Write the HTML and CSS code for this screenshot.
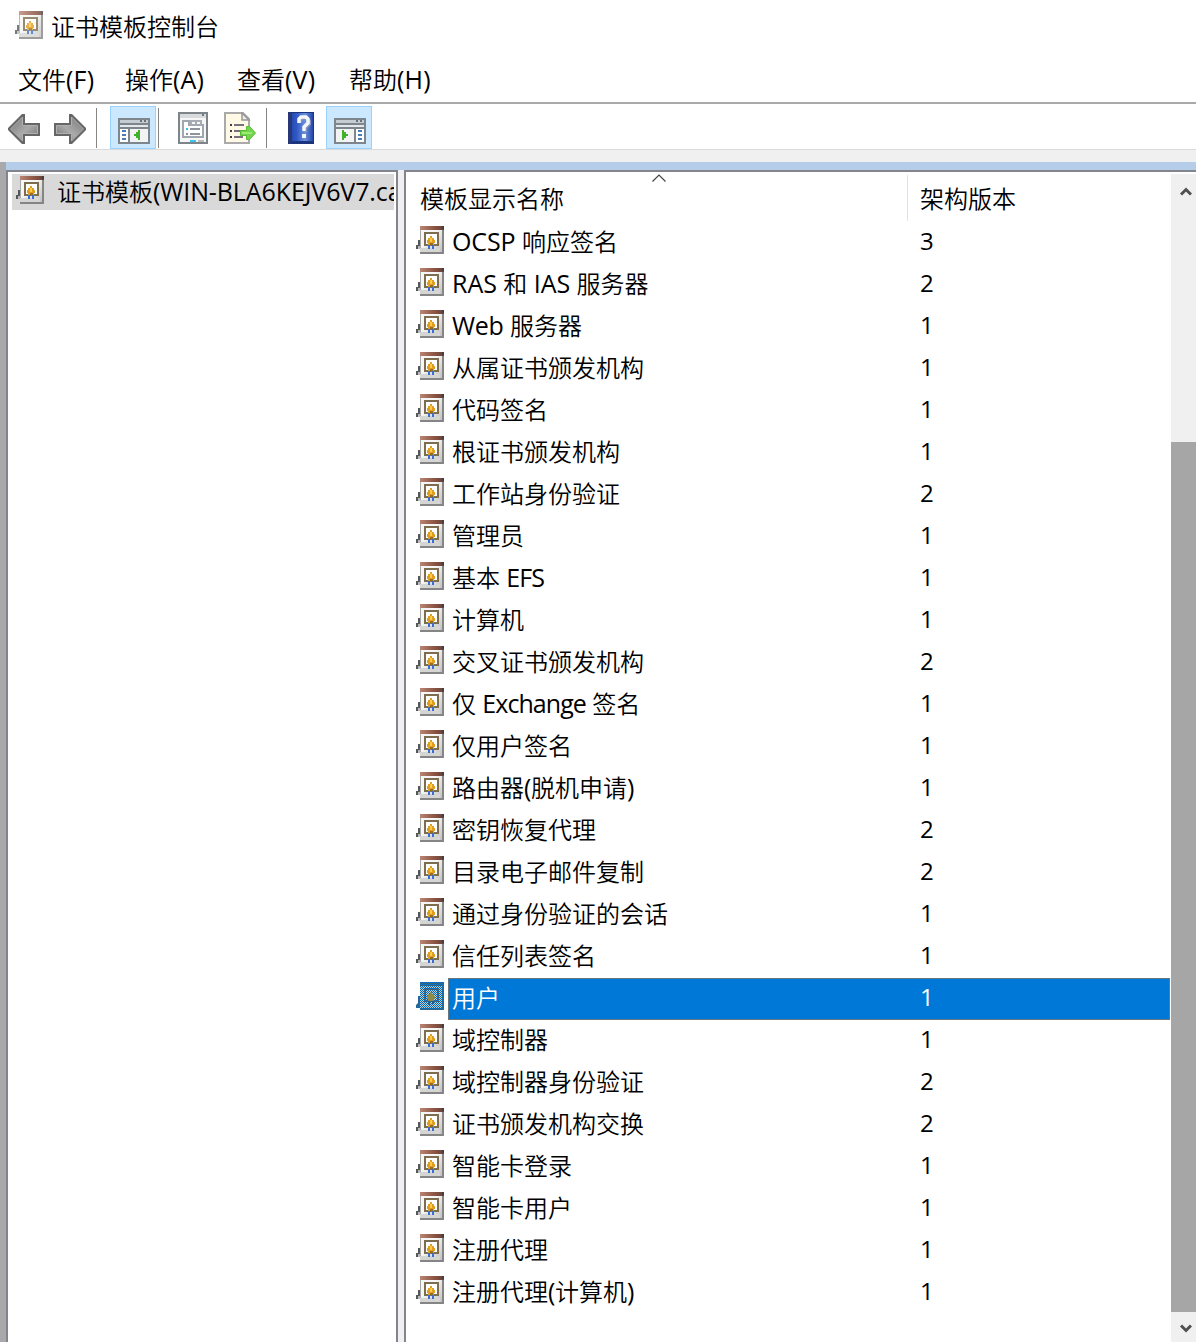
FILE: index.html
```
<!DOCTYPE html>
<html lang="zh-CN">
<head>
<meta charset="utf-8">
<title>证书模板控制台</title>
<link rel="stylesheet" href="styles.css">
</head>
<body>
<svg class="defs" width="0" height="0" aria-hidden="true">
  <defs>
    <linearGradient id="bar" x1="0" x2="1"><stop offset="0" stop-color="#b98674"/><stop offset=".6" stop-color="#8d5443"/><stop offset="1" stop-color="#654039"/></linearGradient>
    <linearGradient id="paper" x1="0" y1="0" x2="1" y2="1"><stop offset=".4" stop-color="#f6f6f5"/><stop offset="1" stop-color="#b9b9b9"/></linearGradient>
    <linearGradient id="metal" x1="0" y1="0" x2="1" y2="1"><stop offset="0" stop-color="#777"/><stop offset=".55" stop-color="#aaa"/><stop offset="1" stop-color="#707070"/></linearGradient>
    <linearGradient id="blue" x1="0" x2="1"><stop offset="0" stop-color="#2345ad"/><stop offset=".3" stop-color="#3159c6"/><stop offset=".65" stop-color="#6d91df"/><stop offset="1" stop-color="#2445a9"/></linearGradient>
    <pattern id="dither" width="2" height="2" patternUnits="userSpaceOnUse"><path fill="#0068b8" d="M0 0h1v1H0zM1 1h1v1H1z"/></pattern>
    <symbol id="cert" viewBox="0 0 28 28">
      <path fill="#55585b" d="M2 14h2v9H0v-4h2z"/>
      <path fill="#b9bcbd" d="M2 20h3v3H2z"/>
      <path fill="url(#paper)" d="M4 0h24v28H4z"/>
      <path fill="#a8a8a8" d="M4 3h1v20H4z"/>
      <path fill="#858585" d="M26 3h2v25H4v-2h22z"/>
      <path fill="#d5d5d3" d="M4 22h20v4H4z"/>
      <path fill="url(#bar)" d="M4 0h24v4H4z"/>
      <path fill="#443e3e" d="M26 0h2v3h-2z"/>
      <path fill="#fff" stroke="#7d6d50" stroke-width="2" d="M9 7h13v12H9z"/>
      <path fill="#3a6fd0" d="M12 17h2v6h-2zM16 17h2v6h-2z"/>
      <path fill="#dfa022" d="M14 10h2v2h2v2h1v3h-1v2h-6v-2h-1v-3h1v-2h2z"/>
      <path fill="#9d6c1c" d="M14 17h3v2h-3z"/>
      <path fill="#ffc94c" d="M14 12h2v4h-2z"/>
    </symbol>
    <symbol id="certsel" viewBox="0 0 28 28">
      <path fill="#24679a" d="M2 14h2v-2h3v14H0v-3l2-2z"/>
      <path fill="#c3cfd6" d="M4 0h24v28H4z"/>
      <path fill="#3f6d88" d="M4 0h24v4H4zM26 4h2v24H4v-2h22z"/>
      <path fill="none" stroke="#56686f" stroke-width="2" d="M9 7h13v12H9z"/>
      <path fill="url(#dither)" d="M4 0h24v28H4z"/>
      <path fill="#1c5c9c" d="M12 18h2v5h-2zM16 18h2v4h-2z"/>
      <path fill="#8c8a4c" d="M14 10h2v2h2v2h1v3h-1v2h-6v-2h-1v-3h1v-2h2z"/>
    </symbol>
    <symbol id="back" viewBox="0 0 32 30">
      <path fill="#666" d="M14 0h3v9h15v13H17v8h-3L0 16v-2z"/>
      <path fill="url(#metal)" stroke="#b0b0b0" stroke-width="1" d="M14.500 3v8.500h15v8h-15V27L2.500 15z"/>
    </symbol>
  </defs>
</svg>
<header class="title"><svg class="cert faded"><use href="#cert"/></svg><h1>证书模板控制台</h1></header>
<nav class="menu"><span>文件<i>(F)</i></span><span>操作<i>(A)</i></span><span>查看<i>(V)</i></span><span>帮助<i>(H)</i></span></nav>
<div class="toolbar">
  <svg class="arrow"><use href="#back"/></svg>
  <svg class="arrow forward"><use href="#back"/></svg>
  <span class="divider first"></span>
  <span class="button on left"><svg width="32" height="26" viewBox="0 0 32 26">
    <path fill="#7d858d" d="M0 0h32v26H0z"/><path fill="#c5ccd2" d="M2 2h28v3H2z"/><path fill="#68727b" d="M22 2h2v2h-2zM26 2h2v2h-2z"/><path fill="#e4e8eb" d="M2 7h28v2H2z"/><path fill="#fff" d="M2 11h8v13H2z"/><path fill="#f3f3f3" d="M12 11h18v13H12z"/><path fill="#4a7db5" d="M4 12h4v2H4zM4 16h4v2H4zM4 20h4v2H4z"/><path fill="#41b12c" d="M20 12h2v10h-2v-2h-2v-2h-2v-2h2v-2h2z"/></svg></span>
  <span class="divider second"></span>
  <svg class="props" width="30" height="32" viewBox="0 0 30 32">
    <path fill="#7d858b" d="M0 0h30v32H0z"/><path fill="#f7f7f7" d="M2 2h26v28H2z"/><path fill="#d8dadc" d="M2 2h26v4H2z"/><path fill="#737b82" d="M24 2h2v2h-2z"/><path fill="#fff" stroke="#a0a7b1" stroke-width="2" d="M5 9h6v4h14v12H5z"/><path fill="#a8acb4" d="M12 8h12v5h-2v-3h-3v3h-2v-3h-3v3h-2z"/><path fill="#36c4ed" d="M8 16h2v2H8zM12 28h6v2h-6z"/><path fill="#8d949b" d="M12 16h10v2H12zM12 21h10v2H12zM8 21h2v2H8z"/><path fill="#bbb" d="M20 28h6v2h-6z"/></svg>
  <svg class="export" width="32" height="32" viewBox="0 0 32 32">
    <path fill="#fff9e5" stroke="#aaa" stroke-width="2" d="M1 1h18l6 6v24H1z"/><path fill="#eee" stroke="#999" stroke-width="1.500" d="M18 1v7h7z"/><path fill="#403a51" d="M6 12h2v2H6zM6 18h2v2H6zM6 24h2v2H6z"/><path fill="#77717b" d="M10 12h10v2H10zM10 18h8v2h-8zM10 24h9v2h-9z"/><path fill="#72d54b" stroke="#55bd33" d="M16.500 18.500h6v-4h3l6 6.500-6 6.500h-3v-4h-6z"/><path fill="#9aea74" d="M18 20h10v2H18z"/></svg>
  <span class="divider third"></span>
  <svg class="help" width="26" height="32" viewBox="0 0 26 32">
    <path fill="#1b347e" d="M0 0h26v32H0z"/><path fill="url(#blue)" d="M2 1h23v28H2z"/><path fill="#273778" d="M0 0h4v32H0z"/><path fill="none" stroke="#8292be" stroke-width="4" d="M12 11V8l3-2h3l3 3v3l-4 4v4"/><path fill="none" stroke="#f4f6fb" stroke-width="3.500" d="M11 11V7l2-2h5l2 2v4l-4 4v4"/><path fill="#f4f6fb" d="M14 22h4v4h-4z"/></svg>
  <span class="button on right"><svg width="32" height="26" viewBox="0 0 32 26">
    <path fill="#7d858d" d="M0 0h32v26H0z"/><path fill="#c5ccd2" d="M2 2h28v3H2z"/><path fill="#68727b" d="M22 2h2v2h-2zM26 2h2v2h-2z"/><path fill="#e4e8eb" d="M2 7h28v2H2z"/><path fill="#f3f3f3" d="M2 11h18v13H2z"/><path fill="#fff" d="M22 11h8v13h-8z"/><path fill="#4a7db5" d="M24 12h4v2h-4zM24 16h4v2h-4zM24 20h4v2h-4z"/><path fill="#41b12c" d="M8 12h2v2h2v2h2v2h-2v2h-2v2H8z"/></svg></span>
</div>
<main class="workspace">
  <div class="panes">
    <aside class="tree"><div class="node"><svg class="cert"><use href="#cert"/></svg><span>证书模板<i>(WIN-BLA6KEJV6V7.ca</i></span></div></aside>
    <section class="list">
      <div class="content">
        <div class="head"><span class="name">模板显示名称</span><span class="version">架构版本</span><svg class="sort" width="14" height="8" viewBox="0 0 14 8"><path fill="none" stroke="#444" stroke-width="1.200" d="M.5 7.500 7 1l6.500 6.500"/></svg></div>
        <div class="row"><svg class="cert"><use href="#cert"/></svg><div class="cells"><span><i class="ocsp">OCSP</i> 响应签名</span><b>3</b></div></div>
        <div class="row"><svg class="cert"><use href="#cert"/></svg><div class="cells"><span><i class="wide">RAS</i> 和 <i class="wide">IAS</i> 服务器</span><b>2</b></div></div>
        <div class="row"><svg class="cert"><use href="#cert"/></svg><div class="cells"><span><i>Web</i> 服务器</span><b>1</b></div></div>
        <div class="row"><svg class="cert"><use href="#cert"/></svg><div class="cells"><span>从属证书颁发机构</span><b>1</b></div></div>
        <div class="row"><svg class="cert"><use href="#cert"/></svg><div class="cells"><span>代码签名</span><b>1</b></div></div>
        <div class="row"><svg class="cert"><use href="#cert"/></svg><div class="cells"><span>根证书颁发机构</span><b>1</b></div></div>
        <div class="row"><svg class="cert"><use href="#cert"/></svg><div class="cells"><span>工作站身份验证</span><b>2</b></div></div>
        <div class="row"><svg class="cert"><use href="#cert"/></svg><div class="cells"><span>管理员</span><b>1</b></div></div>
        <div class="row"><svg class="cert"><use href="#cert"/></svg><div class="cells"><span>基本 <i class="tight">EFS</i></span><b>1</b></div></div>
        <div class="row"><svg class="cert"><use href="#cert"/></svg><div class="cells"><span>计算机</span><b>1</b></div></div>
        <div class="row"><svg class="cert"><use href="#cert"/></svg><div class="cells"><span>交叉证书颁发机构</span><b>2</b></div></div>
        <div class="row"><svg class="cert"><use href="#cert"/></svg><div class="cells"><span>仅 <i class="tight">Exchange</i> 签名</span><b>1</b></div></div>
        <div class="row"><svg class="cert"><use href="#cert"/></svg><div class="cells"><span>仅用户签名</span><b>1</b></div></div>
        <div class="row"><svg class="cert"><use href="#cert"/></svg><div class="cells"><span>路由器<i>(</i>脱机申请<i>)</i></span><b>1</b></div></div>
        <div class="row"><svg class="cert"><use href="#cert"/></svg><div class="cells"><span>密钥恢复代理</span><b>2</b></div></div>
        <div class="row"><svg class="cert"><use href="#cert"/></svg><div class="cells"><span>目录电子邮件复制</span><b>2</b></div></div>
        <div class="row"><svg class="cert"><use href="#cert"/></svg><div class="cells"><span>通过身份验证的会话</span><b>1</b></div></div>
        <div class="row"><svg class="cert"><use href="#cert"/></svg><div class="cells"><span>信任列表签名</span><b>1</b></div></div>
        <div class="row selected"><svg class="cert"><use href="#certsel"/></svg><div class="cells"><span>用户</span><b>1</b></div></div>
        <div class="row"><svg class="cert"><use href="#cert"/></svg><div class="cells"><span>域控制器</span><b>1</b></div></div>
        <div class="row"><svg class="cert"><use href="#cert"/></svg><div class="cells"><span>域控制器身份验证</span><b>2</b></div></div>
        <div class="row"><svg class="cert"><use href="#cert"/></svg><div class="cells"><span>证书颁发机构交换</span><b>2</b></div></div>
        <div class="row"><svg class="cert"><use href="#cert"/></svg><div class="cells"><span>智能卡登录</span><b>1</b></div></div>
        <div class="row"><svg class="cert"><use href="#cert"/></svg><div class="cells"><span>智能卡用户</span><b>1</b></div></div>
        <div class="row"><svg class="cert"><use href="#cert"/></svg><div class="cells"><span>注册代理</span><b>1</b></div></div>
        <div class="row"><svg class="cert"><use href="#cert"/></svg><div class="cells"><span>注册代理<i>(</i>计算机<i>)</i></span><b>1</b></div></div>
      </div>
      <div class="scrollbar">
        <svg width="12" height="9" viewBox="0 0 12 9"><path fill="none" stroke="#505050" stroke-width="3" d="M1 7.500l5-5 5 5"/></svg>
        <div class="thumb"></div>
        <svg class="down" width="12" height="9" viewBox="0 0 12 9"><path fill="none" stroke="#505050" stroke-width="3" d="M1 1.500l5 5 5-5"/></svg>
      </div>
    </section>
  </div>
</main>
</body>
</html>
```
FILE: styles.css
```
* { box-sizing: border-box; }
body {
  margin: 0;
  height: 1342px;
  display: flex;
  flex-direction: column;
  overflow: hidden;
  background: #fff;
  color: #000;
  font: 24px/36px "Noto Sans CJK SC", sans-serif;
  font-weight: 350;
  white-space: nowrap;
  word-spacing: 1px;
}
i, b { font-family: "Open Sans", "Noto Sans", sans-serif; font-style: normal; font-weight: 400; line-height: 1; }
i { font-size: 25px; letter-spacing: -0.3px; }
b { font-size: 24px; line-height: inherit; }
.ocsp { letter-spacing: -0.1px; }
.wide { letter-spacing: 0; }
.tight { letter-spacing: -0.95px; }
svg { display: block; flex: none; }
.defs { position: absolute; }
.cert { width: 28px; height: 28px; }
.faded { opacity: .8; }

.title { height: 54px; display: flex; padding: 11px 0 0 15px; }
.title h1 { margin: -3px 0 0 8px; font: inherit; }
.menu { height: 48px; display: flex; gap: 32px; padding: 7px 0 0 18px; }
.menu span { width: 80px; }
.menu i { letter-spacing: 0.2px; }
.menu span:first-child { width: 75px; }

.toolbar { height: 48px; display: flex; align-items: flex-start; border-top: 2px solid #a9a9a9; border-bottom: 1px solid #dadada; padding-left: 8px; }
.arrow { width: 32px; height: 30px; margin-top: 10px; }
.forward { transform: scaleX(-1); margin-left: 14px; }
.divider { width: 1px; height: 40px; margin-top: 4px; background: #858585; }
.first { margin-left: 10px; }
.button { width: 46px; height: 43px; padding: 11px 0 0 7px; margin-top: 2px; background: #cce8ff; border: 1px solid #99d1ff; }
.left { margin-left: 13px; }
.second { margin-left: 2px; }
.props { margin: 8px 0 0 19px; }
.export { margin: 8px 0 0 16px; }
.third { margin-left: 10px; }
.help { margin: 8px 0 0 21px; }
.right { margin-left: 12px; }

.workspace { flex: 1; min-height: 0; display: flex; border-top: 12px solid #f0f0f0; background: linear-gradient(90deg, #a9a9ac 6px, #b5cde8 6px); padding: 8px 0 0 6px; }
.panes { flex: 1; min-width: 0; display: flex; gap: 6px; background: #f0f0f0; }
.tree { width: 392px; border: 2px solid #82868c; border-bottom: 0; background: #fff; padding: 2px 2px 0 4px; }
.node { height: 36px; display: flex; overflow: hidden; background: #d9d9d9; padding: 2px 0 0 4px; }
.node span { margin: -3px 0 0 13px; }
.node i { letter-spacing: -0.1px; }

.list { flex: 1; min-width: 0; display: flex; border: solid #82868c; border-width: 2px 0 0 2px; background: #fff; }
.content { width: 765px; padding-left: 10px; }
.head { position: relative; height: 50px; display: flex; padding: 3px 0 1px 4px; line-height: 45px; }
.head .name { width: 488px; border-right: 1px solid #e2e2e2; }
.head .version { margin-left: 12px; }
.sort { position: absolute; left: 236px; top: 2px; }
.row { height: 42px; display: flex; padding-right: 1px; }
.row .cert { margin: 4px 4px 0 0; }
.cells { flex: 1; display: flex; padding-left: 4px; line-height: 38px; }
.cells span { width: 468px; }
.selected .cells { color: #fff; background: #0078d7; outline: 1px solid #68777e; outline-offset: -1px; }

.scrollbar { width: 25px; margin-top: 2px; background: #f0f0f0; display: flex; flex-direction: column; padding: 13px 0 0 0; }
.scrollbar svg { margin-left: 9px; }
.thumb { height: 870px; margin-top: 246px; background: #a6a6a6; }
.scrollbar .down { margin-top: 12px; }
```
